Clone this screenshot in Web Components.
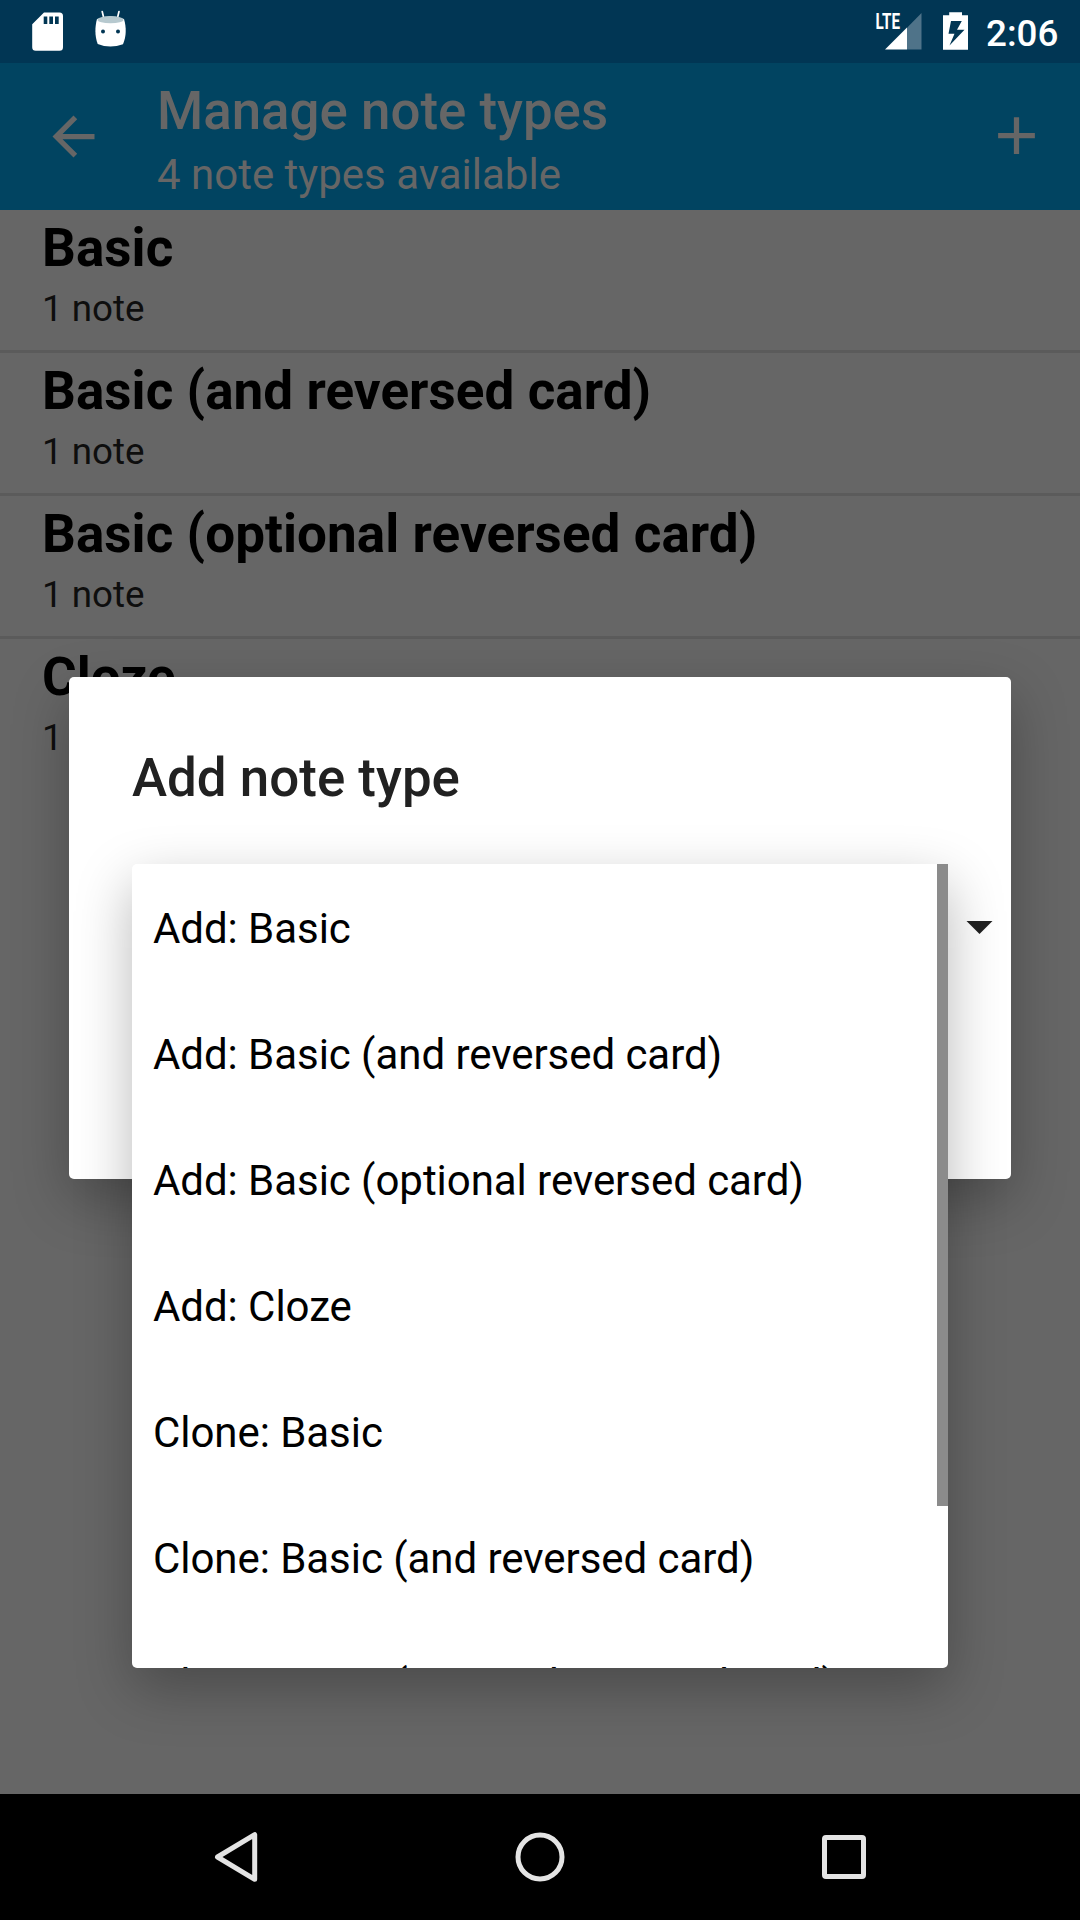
<!DOCTYPE html>
<html lang="en">
<head>
<meta charset="utf-8">
<title>Manage note types</title>
<style>
  html, body { margin: 0; padding: 0; }
  body { width: 1080px; height: 1920px; overflow: hidden; background: #666; font-family: Roboto, "Noto Sans", sans-serif; }
</style>
</head>
<body>
<note-types-screen></note-types-screen>
<script>
const define = (name, html) => {
  const template = document.createElement('template');
  template.innerHTML = html;
  customElements.define(name, class extends HTMLElement {
    constructor() {
      super();
      this.attachShadow({ mode: 'open' }).append(template.content.cloneNode(true));
    }
  });
};

define('status-bar', `
  <style>
    :host { display: flex; justify-content: space-between; height: 63px; background: #013654; color: #fff; }
    .group { display: flex; }
    svg { display: block; }
    .time { font-size: 36.75px; font-weight: 500; line-height: 44px; padding-top: 11.5px; width: 94px; white-space: nowrap; }
    text { font-family: Roboto, sans-serif; font-weight: 700; font-size: 21.6px; fill: #fff; }
  </style>
  <div class="group">
    <svg width="140" height="63" viewBox="0 0 140 63">
      <path fill="#fff" fill-rule="evenodd" d="M44 12.5H59.500Q63 12.500 63 16V47.300Q63 50.800 59.500 50.800H35.700Q32.200 50.800 32.200 47.300V24.300ZM43.700 16.500V24H47.300V16.500ZM49.300 16.500V24H53V16.500ZM55 16.500V24H58.700V16.500Z"/>
      <path stroke="#fff" stroke-width="1.700" stroke-linecap="round" d="M102.200 11.500L104 19M119 11.500L117.200 19"/>
      <path fill="#fff" d="M97 19C94.800 27 94.700 36 97.700 44Q110 49 123 44.200C126.500 36 126.400 27 124 19Q110.500 14 97 19Z"/>
      <ellipse cx="110.500" cy="19.700" rx="13" ry="3.600" fill="#b7c9cf"/>
      <circle cx="103" cy="31.500" r="2" fill="#013654"/><circle cx="118" cy="31.500" r="2" fill="#013654"/>
    </svg>
  </div>
  <div class="group">
    <svg width="116" height="63" viewBox="870 0 116 63">
      <path fill="#4f7389" d="M907 27.700L921.500 13V49.500H907Z"/>
      <path fill="#fff" d="M885 49.500L907 27.500V49.500Z"/>
      <text x="875.500" y="29" textLength="24.500" lengthAdjust="spacingAndGlyphs">LTE</text>
      <path fill="#fff" fill-rule="evenodd" d="M943 15.200H949.200V12.300H962V15.200H968V49.700H943ZM951 21L948.500 33.800H954.500L949.500 45.500L964.500 29.800H957L961.800 21Z"/>
    </svg>
    <div class="time">2:06</div>
  </div>
`);

define('app-toolbar', `
  <style>
    :host { display: flex; height: 147px; background: #014461; color: #666; }
    svg { display: block; fill: #666; width: 63px; height: 63px; }
    .back { padding: 42px 52px 0 42px; }
    .add { padding: 41px 32px 0 0; }
    .text { flex: 1; display: flex; flex-direction: column; gap: 8px; padding-top: 17px; white-space: nowrap; }
    .title { font-size: 52.850px; font-weight: 500; line-height: 62px; }
    .subtitle { font-size: 42px; line-height: 49px; }
  </style>
  <div class="back"><svg viewBox="0 0 24 24"><path d="M20 11H7.830l5.590-5.590L12 4l-8 8 8 8 1.410-1.410L7.830 13H20v-2z"/></svg></div>
  <div class="text">
    <div class="title"><slot name="title"></slot></div>
    <div class="subtitle"><slot name="subtitle"></slot></div>
  </div>
  <div class="add"><svg viewBox="0 0 24 24"><path d="M19 13h-6v6h-2v-6H5v-2h6V5h2v6h6v2z"/></svg></div>
`);

define('note-type-row', `
  <style>
    :host { display: flex; flex-direction: column; gap: 8px; box-sizing: border-box; height: 143px; padding: 7px 42px 0; border-bottom: 3px solid #5b5b5b; white-space: nowrap; }
    :host([last]) { border-bottom: 0; }
    .name { font-size: 53px; letter-spacing: 0.060px; font-weight: 700; line-height: 62px; color: #000; }
    .count { font-size: 36.750px; line-height: 44px; color: #0e0e0e; }
  </style>
  <div class="name"><slot></slot></div>
  <div class="count"><slot name="count">1 note</slot></div>
`);

define('dropdown-item', `
  <style>
    :host { display: flex; align-items: center; flex: none; height: 126px; padding: 4px 21px 0; box-sizing: border-box; font-size: 42px; letter-spacing: -0.050px; line-height: 50px; color: #000; white-space: nowrap; }
  </style>
  <slot></slot>
`);

define('dropdown-popup', `
  <style>
    :host { display: block; border-radius: 5px; background: #fff; box-shadow: 0 20px 56px rgba(0,0,0,.28); }
    .clip { display: flex; height: 100%; overflow: hidden; border-radius: 5px 0 5px 5px; }
    .list { flex: 1; display: flex; flex-direction: column; min-width: 0; }
    .thumb { width: 11px; height: 642px; background: #8b8b8b; }
  </style>
  <div class="clip"><div class="list"><slot></slot></div><div class="thumb"></div></div>
`);

define('note-dialog', `
  <style>
    :host { display: block; box-sizing: border-box; padding: 70px 0 0 63px; border-radius: 5px; background: #fff; box-shadow: 0 20px 56px rgba(0,0,0,.28); }
    .title { font-size: 52.900px; font-weight: 500; line-height: 62px; color: #212121; white-space: nowrap; }
    .spinner { display: flex; justify-content: flex-end; padding: 112px 18px 0 0; }
    svg { display: block; }
  </style>
  <div class="title"><slot></slot></div>
  <div class="spinner"><svg width="27" height="13" viewBox="0 0 27 13"><path fill="#212121" d="M0.500 0H26.500L13.500 13Z"/></svg></div>
`);

define('navigation-bar', `
  <style>
    :host { display: flex; justify-content: space-between; align-items: center; box-sizing: border-box; height: 126px; padding: 0 204px; background: #000; position: relative; }
    svg { display: block; width: 64px; height: 64px; fill: none; stroke: #e4e4e4; stroke-width: 5; stroke-linejoin: round; }
  </style>
  <svg viewBox="204 1825 64 64"><path d="M217.500 1857L254.700 1834.700V1879.300Z"/></svg>
  <svg viewBox="508 1825 64 64"><circle cx="540" cy="1857" r="22"/></svg>
  <svg viewBox="812 1825 64 64"><rect x="824.500" y="1837.500" width="39" height="39" rx="1.500"/></svg>
`);

define('note-types-screen', `
  <style>
    :host { display: flex; flex-direction: column; position: relative; width: 1080px; height: 1920px; background: #666; overflow: hidden; }
    main { flex: 1; display: flex; flex-direction: column; min-height: 0; }
    note-dialog { position: absolute; left: 69px; top: 677px; width: 942px; height: 502px; }
    dropdown-popup { position: absolute; left: 132px; top: 864px; width: 816px; height: 804px; }
  </style>
  <status-bar></status-bar>
  <app-toolbar><span slot="title">Manage note types</span><span slot="subtitle">4 note types available</span></app-toolbar>
  <main>
    <note-type-row>Basic</note-type-row>
    <note-type-row>Basic (and reversed card)</note-type-row>
    <note-type-row>Basic (optional reversed card)</note-type-row>
    <note-type-row last>Cloze</note-type-row>
  </main>
  <note-dialog>Add note type</note-dialog>
  <dropdown-popup>
    <dropdown-item>Add: Basic</dropdown-item>
    <dropdown-item>Add: Basic (and reversed card)</dropdown-item>
    <dropdown-item>Add: Basic (optional reversed card)</dropdown-item>
    <dropdown-item>Add: Cloze</dropdown-item>
    <dropdown-item>Clone: Basic</dropdown-item>
    <dropdown-item>Clone: Basic (and reversed card)</dropdown-item>
    <dropdown-item>Clone: Basic (optional reversed card)</dropdown-item>
  </dropdown-popup>
  <navigation-bar></navigation-bar>
`);
</script>
</body>
</html>
